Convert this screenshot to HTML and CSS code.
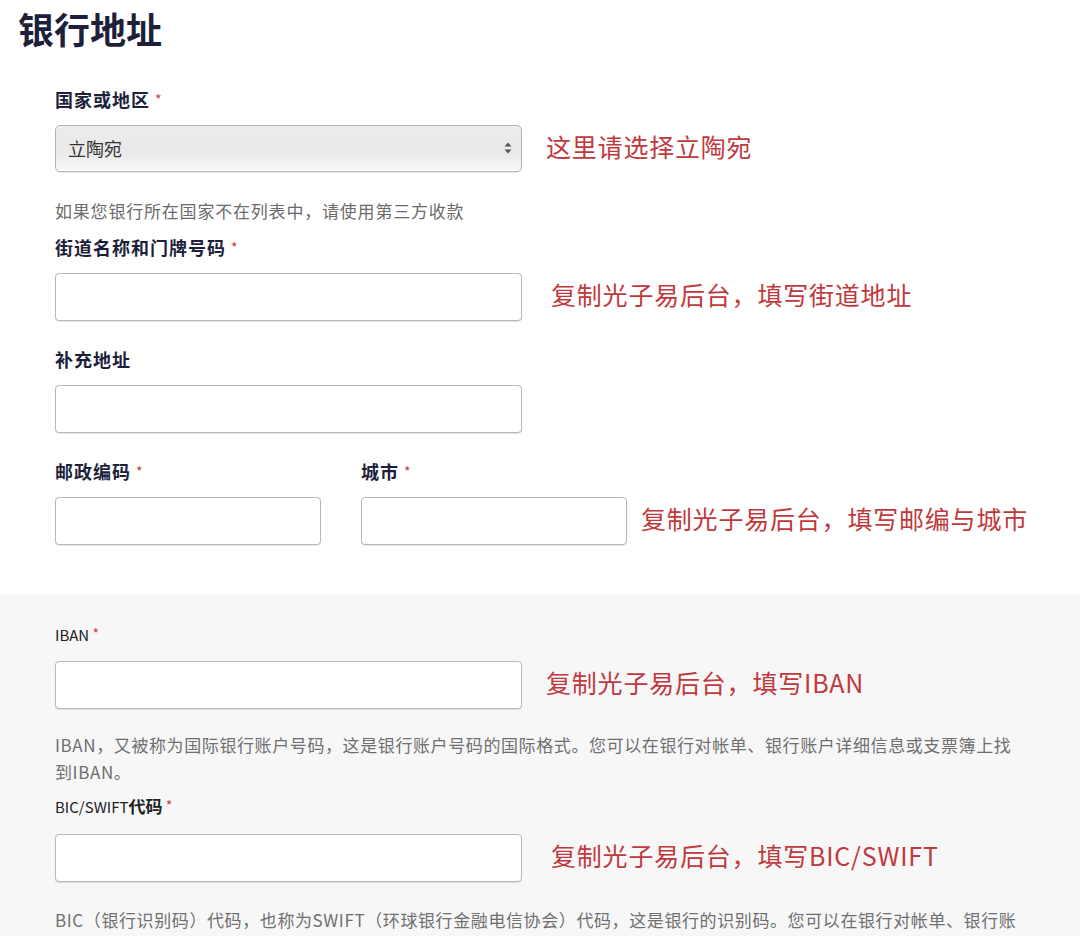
FILE: index.html
```html
<!DOCTYPE html>
<html lang="zh-CN">
<head>
	<meta charset="UTF-8">
	<title>银行地址</title>
	<link rel="stylesheet" href="styles.css">
</head>
<body>
	<h1 class="title">银行地址</h1>

	<div class="section">
		<div class="field first">
			<label class="label">国家或地区 <span class="req">*</span></label>
			<div class="row">
				<div class="select-wrap">
					<div class="select">立陶宛</div>
					<svg class="arrows" width="8" height="12" viewBox="0 0 8 12">
						<path d="M4 0.5 L7.5 4.5 L0.5 4.5 Z" fill="#555"/>
						<path d="M4 11.5 L7.5 7.5 L0.5 7.5 Z" fill="#555"/>
					</svg>
				</div>
				<span class="note">这里请选择立陶宛</span>
			</div>
			<p class="help">如果您银行所在国家不在列表中，请使用第三方收款</p>
		</div>

		<div class="field tight">
			<label class="label">街道名称和门牌号码 <span class="req">*</span></label>
			<div class="row">
				<input class="input" type="text">
				<span class="note wide">复制光子易后台，填写街道地址</span>
			</div>
		</div>

		<div class="field">
			<label class="label">补充地址</label>
			<div class="row">
				<input class="input" type="text">
			</div>
		</div>

		<div class="field">
			<div class="row top">
				<div class="half">
					<label class="label">邮政编码 <span class="req">*</span></label>
					<input class="input small" type="text">
				</div>
				<div class="half">
					<label class="label">城市 <span class="req">*</span></label>
					<div class="row">
						<input class="input small" type="text">
						<span class="note near">复制光子易后台，填写邮编与城市</span>
					</div>
				</div>
			</div>
		</div>
	</div>

	<div class="section grey">
		<div class="field first">
			<label class="label light">IBAN <span class="req">*</span></label>
			<div class="row">
				<input class="input" type="text">
				<span class="note">复制光子易后台，填写IBAN</span>
			</div>
			<p class="help long">IBAN，又被称为国际银行账户号码，这是银行账户号码的国际格式。您可以在银行对帐单、银行账户详细信息或支票簿上找到IBAN。</p>
		</div>

		<div class="field bic">
			<label class="label light">BIC/SWIFT<b>代码</b> <span class="req">*</span></label>
			<div class="row">
				<input class="input" type="text">
				<span class="note wide">复制光子易后台，填写BIC/SWIFT</span>
			</div>
			<p class="help long last">BIC（银行识别码）代码，也称为SWIFT（环球银行金融电信协会）代码，这是银行的识别码。您可以在银行对帐单、银行账户详细信息或支票簿上找到BIC。</p>
		</div>
	</div>
</body>
</html>
```

FILE: styles.css
```css
body {
	margin: 0;
	background: #fff;
	font-family: "Noto Sans CJK SC", "Liberation Sans", sans-serif;
	color: #1e1f3b;
	overflow: hidden;
}
.title {
	margin: 0;
	padding: 6px 0 0 18px;
	font-size: 36px;
	line-height: 44px;
	font-weight: bold;
	color: #1e1f3b;
}
.section {
	padding: 0 0 50px 55px;
}
.section.grey {
	padding-top: 2px;
	background: #f7f7f8;
}
.field {
	margin-top: 26px;
}
.field.first {
	margin-top: 37px;
}
.grey .field.first {
	margin-top: 24px;
}
.field.tight {
	margin-top: 12px;
}
.field.bic {
	margin-top: 8px;
}
.label {
	display: block;
	margin-bottom: 14px;
	font-size: 18px;
	line-height: 24px;
	font-weight: bold;
	letter-spacing: 1px;
}
.label.light {
	font-size: 15px;
	font-weight: normal;
	letter-spacing: 0;
	color: #222;
}
.label.light b {
	font-size: 17px;
}
.bic .label {
	margin-bottom: 15px;
}
.req {
	color: #c73b40;
	font-size: 14px;
	font-weight: normal;
	vertical-align: 2px;
}
.row {
	display: flex;
	align-items: center;
}
.row.top {
	align-items: flex-start;
}
.half {
	flex-shrink: 0;
	width: 306px;
}
.half + .half {
	width: auto;
}
.select-wrap {
	position: relative;
	flex-shrink: 0;
	width: 467px;
	height: 47px;
}
.select {
	box-sizing: border-box;
	height: 47px;
	padding-left: 12px;
	border: 1px solid #b3b3b3;
	border-radius: 5px;
	background: linear-gradient(#ececec, #e9e9e9 60%, #f8f8f8);
	box-shadow: inset 0 -1px 0 #fff, 0 1px 1px rgba(0,0,0,.08);
	font-size: 18px;
	line-height: 45px;
	color: #333;
}
.arrows {
	position: absolute;
	right: 10px;
	top: 17px;
}
.input {
	box-sizing: border-box;
	flex-shrink: 0;
	width: 467px;
	height: 48px;
	margin: 0;
	border: 1px solid #b8b8b8;
	border-radius: 4px;
	background: #fff;
	box-shadow: 0 1px 1px rgba(0,0,0,.1);
	font-family: inherit;
	font-size: 16px;
}
.input.small {
	width: 266px;
}
.note {
	margin-left: 24px;
	padding-bottom: 6px;
	font-size: 25px;
	line-height: 34px;
	letter-spacing: 0.8px;
	color: #c0393c;
	white-space: nowrap;
}
.note.wide {
	margin-left: 29px;
}
.note.near {
	margin-left: 14px;
}
.help {
	margin: 27px 0 0;
	font-size: 17px;
	line-height: 24px;
	letter-spacing: 0.8px;
	color: #6b6b6b;
}
.help.long {
	width: 965px;
	margin-top: 22px;
	line-height: 27px;
	letter-spacing: 0.6px;
	color: #6f6f6f;
}
.help.last {
	margin-top: 24px;
}
```
